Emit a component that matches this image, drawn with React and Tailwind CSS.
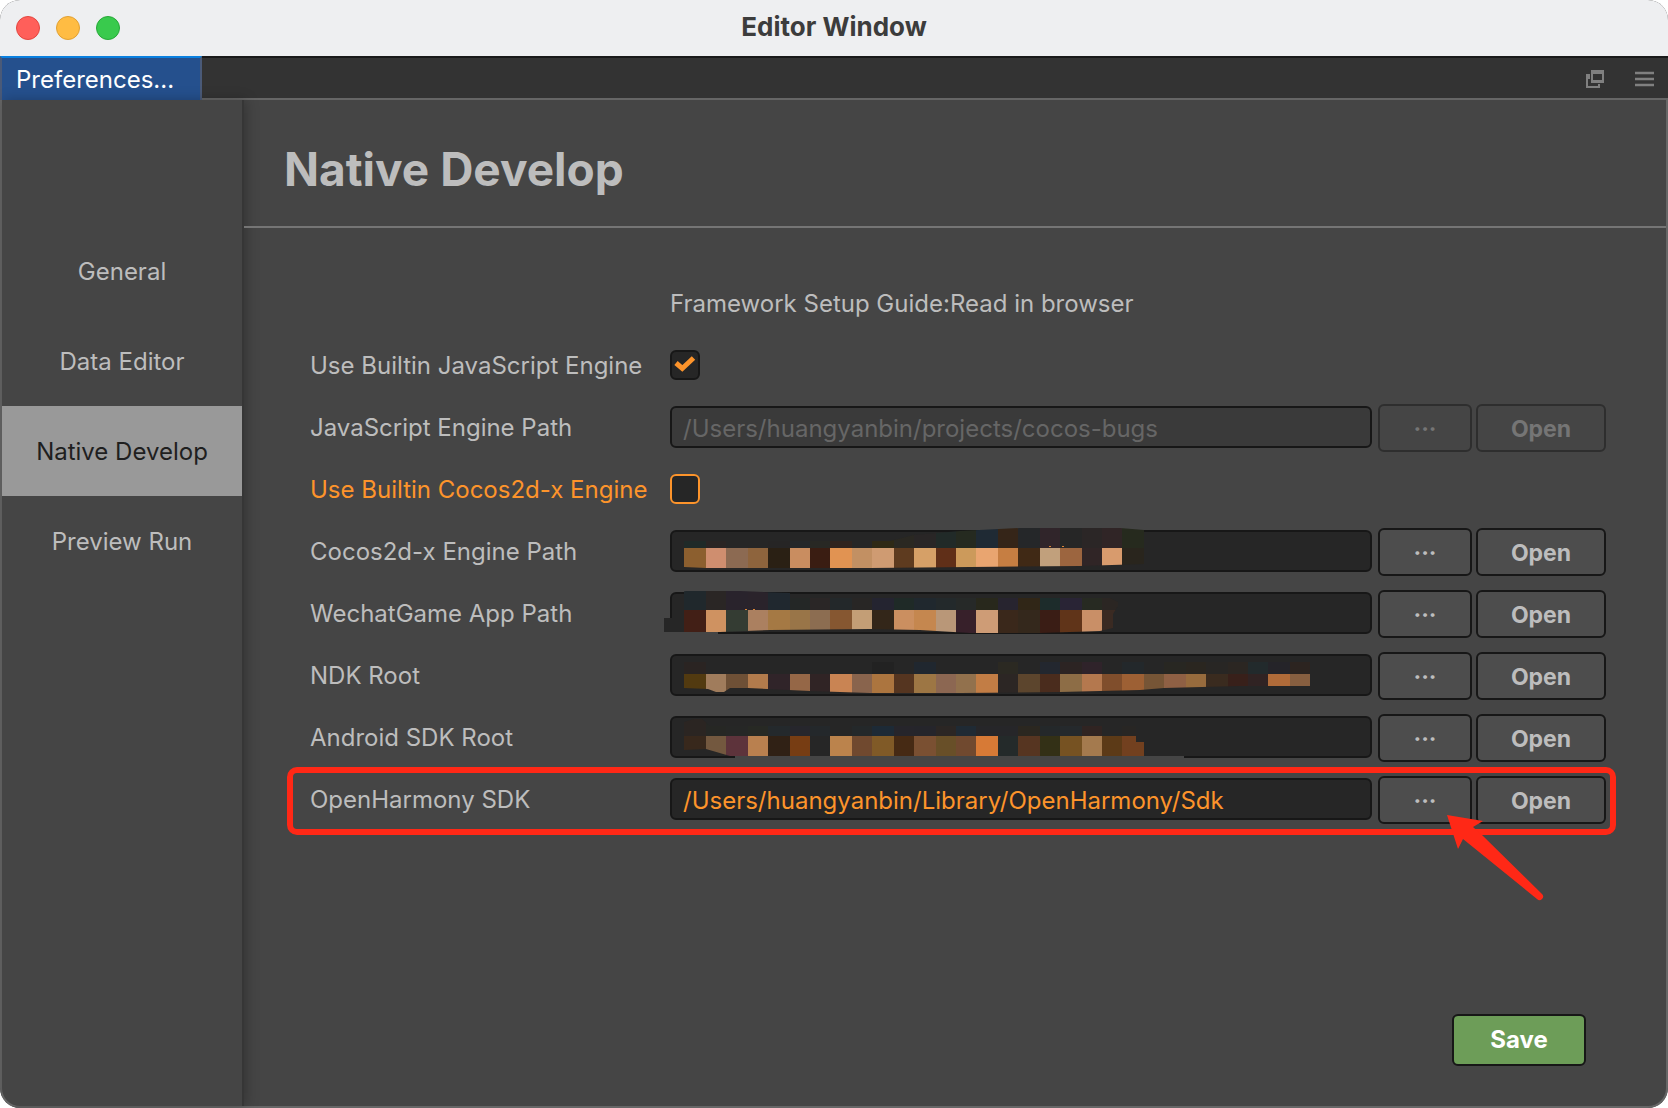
import React, { useState } from "react";

const SIDEBAR = ["General", "Data Editor", "Native Develop", "Preview Run"];

// Column edges of the mosaic cells, measured from the left edge of a field.
const EDGES = [
  14, 36, 56, 78, 98, 120, 140, 160, 182, 202, 224, 244, 266, 286, 306, 328, 348, 370, 390, 412, 432, 452, 474, 494,
  516, 536, 558, 578, 598, 620, 640, 662, 682,
];

const MOSAICS = {
  cocos: {
    split: 18,
    clip: "M14 11H220L244 5L290 1L350 -2H450L474 0V34L410 36L300 37L200 38L36 38L14 37Z",
    upper: ["#1f2a28", "#2a2524", "#262626", "#262626", "#262525", "#252729", "#282824", "#30241f", "#262626", "#2e2916", "#2a2822", "#292626", "#212a28", "#252a20", "#1f2a34", "#352518", "#252729", "#30252a", "#262626", "#2b2626", "#302526", "#262a1e"],
    lower: ["#8c5f2f", "#cf8e6f", "#8c6a52", "#8e643d", "#2a2014", "#c98d60", "#3a1d12", "#e19352", "#c29063", "#cf9b72", "#5e3b1f", "#d6a067", "#602f18", "#cc9a5b", "#e9a570", "#c67e42", "#402915", "#c1a07c", "#9c653f", "#302526", "#d89b6d", "#29251d"],
    patches: [],
    specks: [[379, 16], [392, 16]],
  },
  wechat: {
    split: 18,
    clip: "M-6 28L0 26V2L16 -1H70L120 1V6H440L448 10V14L443 22V36L430 39L370 41H300L250 38L200 37L100 38L50 40H-6Z",
    upper: ["#20282c", "#2a2625", "#29232c", "#2a232b", "#20282f", "#242726", "#2a2626", "#23282a", "#282625", "#242430", "#1f2a27", "#20282e", "#23292b", "#262928", "#28281c", "#27242f", "#302617", "#1d2c2b", "#292435", "#272a22", "#2b2623"],
    lower: ["#421f16", "#cf9261", "#343c33", "#ab8060", "#a57944", "#997548", "#8c6d51", "#865731", "#c39e76", "#332619", "#cb8f60", "#c5874f", "#b99778", "#37202a", "#ce9c76", "#3a281b", "#34281c", "#3a1d15", "#603419", "#c98f67", "#3a2a22"],
    patches: [[-6, 26, 20, 14, "#262626"], [-6, 40, 54, 2, "#454545"]],
    specks: [[75, 17], [83, 17]],
  },
  ndk: {
    split: 20,
    clip: "M14 8H640V32L570 32L494 34L470 36L390 38L290 39H200L140 37L78 34H60L54 38H46L38 35L14 34Z",
    upper: ["#2a2422", "#262626", "#262626", "#262626", "#262626", "#262626", "#262626", "#262626", "#262626", "#222222", "#262626", "#20272f", "#262626", "#262626", "#262626", "#2b2922", "#262626", "#23272f", "#2c2423", "#2f232a", "#262626", "#23282b", "#262626", "#282722", "#2a2620", "#282624", "#2b2622", "#222a2c", "#252429", "#2c2420", "#262626"],
    lower: ["#523a10", "#a07c5c", "#6e5036", "#b27b4c", "#302429", "#956747", "#302425", "#c98453", "#89644d", "#ac753f", "#553520", "#9d7644", "#8c6752", "#92714d", "#c27d45", "#2c2624", "#5c452d", "#4a2c1d", "#8d6d46", "#b4784e", "#804e2c", "#9d6034", "#765536", "#8f6044", "#976b3d", "#3a2b1f", "#38201a", "#302323", "#b06b39", "#875f40", "#302425"],
    patches: [],
    specks: [],
  },
  android: {
    split: 20,
    clip: "M14 6L24 3H32L40 10H466V26H474V40H60L36 33L14 34Z",
    upper: ["#2b2522", "#262724", "#262726", "#272924", "#24292c", "#26262c", "#24282b", "#262626", "#24282a", "#1d2a36", "#26252b", "#25252b", "#2b2624", "#1f2a34", "#262629", "#262629", "#2b2720", "#24282a", "#25292c", "#302422", "#262626", "#282624", "#26263a"],
    lower: ["#38281c", "#73583f", "#5d333b", "#b9804f", "#302115", "#773d13", "#262626", "#bb834c", "#70492f", "#805a27", "#462a14", "#7a5032", "#684f28", "#70492f", "#d77a36", "#242a2a", "#563521", "#333016", "#765222", "#a47a4e", "#5c3a17", "#72401f"],
    patches: [[65, 40, 449, 2, "#454545"]],
    specks: [],
  },
};

function Mosaic({ name }) {
  const m = MOSAICS[name];
  return (
    <svg className="pointer-events-none absolute left-0 top-0 overflow-visible" width="702" height="42" viewBox="0 0 702 42" aria-hidden="true">
      <clipPath id={"mosaic-" + name}>
        <path d={m.clip} />
      </clipPath>
      {m.patches.map(([x, y, w, h, fill], i) => (
        <rect key={i} x={x} y={y} width={w} height={h} fill={fill} />
      ))}
      <g clipPath={`url(#mosaic-${name})`} shapeRendering="crispEdges">
        {m.upper.map((fill, i) => (
          <rect key={i} x={EDGES[i]} y={-4} width={EDGES[i + 1] - EDGES[i]} height={m.split + 4} fill={fill} />
        ))}
        {m.lower.map((fill, i) => (
          <rect key={i} x={EDGES[i]} y={m.split} width={EDGES[i + 1] - EDGES[i]} height={28} fill={fill} />
        ))}
      </g>
      {m.specks.map(([x, y], i) => (
        <rect key={i} x={x} y={y} width="2" height="1" fill="#d98538" />
      ))}
    </svg>
  );
}

const ROW = "relative grid h-12 grid-cols-[360px_1fr] items-center";

function CheckRow({ id, label, accent, defaultChecked }) {
  const [checked, setChecked] = useState(defaultChecked);
  return (
    <div className={ROW}>
      <label htmlFor={id} className={accent ? "text-[#fd942b]" : ""}>
        {label}
      </label>
      <div className="relative flex size-8 items-start">
        <input
          id={id}
          type="checkbox"
          checked={checked}
          onChange={(e) => setChecked(e.target.checked)}
          className={
            "size-[30px] appearance-none rounded-md border-2 bg-[#262626] " +
            (accent ? "border-[#fd942b]" : "border-[#171717]")
          }
        />
        {checked && (
          <svg className="pointer-events-none absolute left-0 top-0" width="30" height="30" viewBox="0 0 30 30" aria-hidden="true">
            <path d="M6 13L12.3 18.5L23.5 8" fill="none" stroke="#fd942b" strokeWidth="5" />
          </svg>
        )}
      </div>
    </div>
  );
}

const BUTTON = "h-12 rounded-md border-2 pt-0.5 text-[23px] font-bold";
const ENABLED = "border-[#171717] bg-[#4d4d4d] text-[#bdbdbd]";
const DISABLED = "border-[#2e2e2e] bg-[#454545] text-[#757575]";

function PathRow({ id, label, value = "", disabled = false, mosaic, children }) {
  const tone = disabled ? DISABLED : ENABLED;
  return (
    <div className={ROW}>
      <label htmlFor={id}>{label}</label>
      <div className="flex items-center">
        <div className="relative min-w-0 flex-1 pb-0.5">
          <input
            id={id}
            type="text"
            defaultValue={value}
            disabled={disabled}
            className={
              "block h-[42px] w-full rounded-md border-2 border-[#171717] px-[11px] pt-0.5 outline-none " +
              (disabled ? "bg-[#3a3a3a] text-[#666666]" : "bg-[#262626] text-[#fd942b]")
            }
          />
          {mosaic && <Mosaic name={mosaic} />}
        </div>
        <button type="button" disabled={disabled} aria-label={"Browse " + label} className={`${BUTTON} ${tone} ml-1.5 w-[94px]`}>
          ···
        </button>
        <button type="button" disabled={disabled} className={`${BUTTON} ${tone} ml-1 w-[130px]`}>
          Open
        </button>
      </div>
      {children}
    </div>
  );
}

export default function App() {
  const [active, setActive] = useState("Native Develop");
  return (
    <div className="bg-white font-['Inter',sans-serif] text-2xl leading-8 text-[#bdbdbd]">
      <div className="flex min-h-screen flex-col overflow-hidden rounded-[20px] bg-[#454545]">
        <header className="grid h-14 grid-cols-[1fr_auto_1fr] items-center bg-[#eeeff1] px-4">
          <div className="flex gap-4">
            <button type="button" aria-label="Close" className="size-6 rounded-full border border-[#e2463f] bg-[#ff5f5a]" />
            <button type="button" aria-label="Minimize" className="size-6 rounded-full border border-[#e0a033] bg-[#ffbc43]" />
            <button type="button" aria-label="Zoom" className="size-6 rounded-full border border-[#27a838] bg-[#39ca4d]" />
          </div>
          <h1 className="pb-0.5 text-[26px] font-bold text-[#3c3c3c]">Editor Window</h1>
        </header>

        <div className="flex h-11 bg-[#333333]">
          <button type="button" className="w-[202px] border-x-2 border-t-2 border-x-[#4a5a78] border-t-[#0a80e0] bg-[#25508d] pl-3.5 pt-0.5 text-left text-[#ffffff]">
            Preferences...
          </button>
          <div className="flex flex-1 items-center justify-end gap-7 border-b-2 border-t-2 border-b-[#666666] border-t-[#1a1a1a] pr-3 pt-0.5">
            <button type="button" aria-label="Pop out" className="text-[#808080]">
              <svg width="22" height="20" viewBox="0 0 22 20" fill="currentColor" aria-hidden="true">
                <path fillRule="evenodd" d="M7 1h13v13H7zM9 5v6h9V5z" />
                <path d="M2 5h4v5H4v7h10v-2h2v4H2z" />
              </svg>
            </button>
            <button type="button" aria-label="Menu" className="text-[#808080]">
              <svg width="22" height="20" viewBox="0 0 22 20" aria-hidden="true">
                <path d="M1 4H20M1 10H20M1 16H20" stroke="currentColor" strokeWidth="2.6" />
              </svg>
            </button>
          </div>
        </div>

        <div className="flex flex-1 rounded-b-[20px] border-x-2 border-b-2 border-[#666666]">
          <nav className="flex w-[242px] shrink-0 flex-col border-r-2 border-[#363636] pt-[126px] shadow-[2px_0_12px_rgba(0,0,0,0.25)]">
            {SIDEBAR.map((item) => (
              <button
                key={item}
                type="button"
                onClick={() => setActive(item)}
                className={"h-[90px] pt-0.5 " + (item === active ? "bg-[#999999] text-[#1f1f1f]" : "")}
              >
                {item}
              </button>
            ))}
          </nav>

          <main className="flex min-w-0 flex-1 flex-col">
            <div className="flex h-32 items-center border-b-2 border-[#757575] pl-10 pt-3">
              <h2 className="text-[46px] font-bold leading-[56px]">Native Develop</h2>
            </div>

            <form className="flex flex-1 flex-col pb-10 pl-[66px] pr-[60px] pt-[52px]" onSubmit={(e) => e.preventDefault()}>
              <div className="flex flex-col gap-3.5">
                <div className={ROW}>
                  <p className="col-start-2">
                    Framework Setup Guide:<a href="#guide">Read in browser</a>
                  </p>
                </div>
                <CheckRow id="js-builtin" label="Use Builtin JavaScript Engine" defaultChecked={true} />
                <PathRow id="js-path" label="JavaScript Engine Path" value="/Users/huangyanbin/projects/cocos-bugs" disabled />
                <CheckRow id="cocos-builtin" label="Use Builtin Cocos2d-x Engine" accent defaultChecked={false} />
                <PathRow id="cocos-path" label="Cocos2d-x Engine Path" mosaic="cocos" />
                <PathRow id="wechat-path" label="WechatGame App Path" mosaic="wechat" />
                <PathRow id="ndk-root" label="NDK Root" mosaic="ndk" />
                <PathRow id="android-root" label="Android SDK Root" mosaic="android" />
                <PathRow id="harmony-sdk" label="OpenHarmony SDK" value="/Users/huangyanbin/Library/OpenHarmony/Sdk">
                  <div className="pointer-events-none absolute -bottom-[11px] -left-[23px] -right-2.5 -top-[9px] rounded-[10px] border-6 border-[#ff2816]" />
                  <svg className="pointer-events-none absolute right-[59px] top-[37px]" width="102" height="90" viewBox="0 0 102 90" aria-hidden="true">
                    <path d="M2 2L38 8L28 14L37 22L97 81A3.4 3.4 0 0 1 92 86L18 26L13 36Z" fill="#ff2816" />
                  </svg>
                </PathRow>
              </div>
              <div className="mt-auto flex justify-end pr-5">
                <button type="submit" className="h-[52px] w-[134px] rounded-md border-2 border-[#171717] bg-[#6d9d58] font-bold text-white">
                  Save
                </button>
              </div>
            </form>
          </main>
        </div>
      </div>
    </div>
  );
}
